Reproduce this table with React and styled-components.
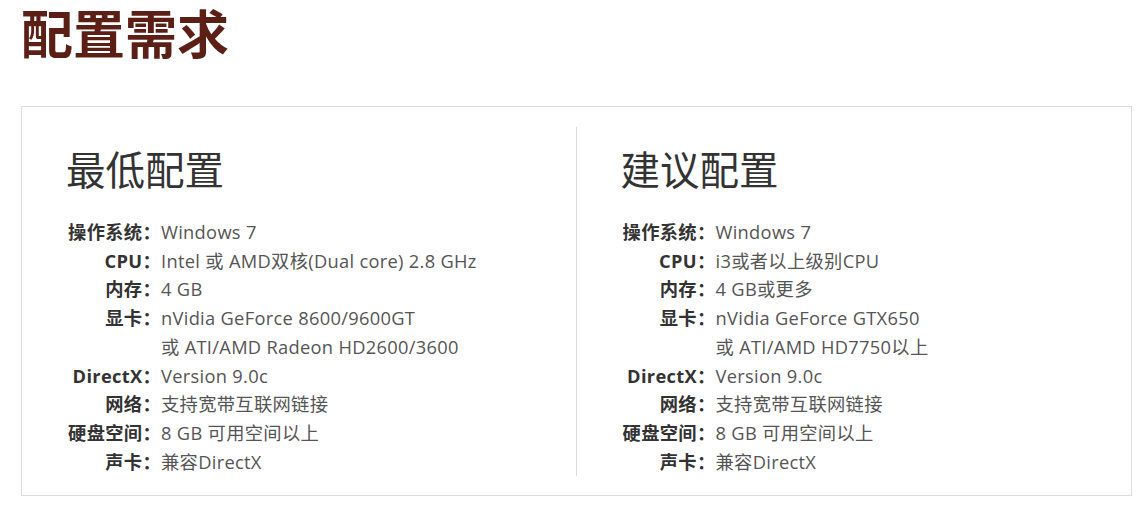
import React from "react";
import styled, { createGlobalStyle } from "styled-components";

const GlobalStyle = createGlobalStyle`
  body {
    margin: 0;
    background: #fff;
    font-family: "Open Sans", "Noto Sans CJK SC", sans-serif;
  }
`;

const Page = styled.div`
  padding: 2px 11px 0 21px;
`;

const Title = styled.h1`
  margin: 0 0 44px;
  font-family: "Noto Sans CJK SC", sans-serif;
  font-size: 52px;
  line-height: 60px;
  font-weight: 700;
  color: #5b1f16;
`;

const Box = styled.div`
  display: grid;
  grid-template-columns: 1fr 1fr;
  border: 1px solid #dcdcdc;
  padding: 20px 0 19px;
`;

const Column = styled.div`
  padding: 17px 0 0 43px;
  border-right: ${({ divider }) => (divider ? "1px solid #dcdcdc" : "none")};
`;

const Heading = styled.h2`
  margin: 0 0 26px 1px;
  font-family: "Noto Sans CJK SC", sans-serif;
  font-size: 39.5px;
  line-height: 48px;
  font-weight: 400;
  color: #333;
`;

const Specs = styled.dl`
  display: grid;
  grid-template-columns: 96px 1fr;
  margin: 0;
  line-height: 28.7px;
`;

const Label = styled.dt`
  text-align: right;
  white-space: nowrap;
  font-size: 18.3px;
  letter-spacing: 0.3px;
  font-weight: 700;
  color: #333;
`;

const Value = styled.dd`
  margin: 0;
  font-size: 18.3px;
  letter-spacing: 0.3px;
  color: #555;
`;

const minimum = [
  ["操作系统：", ["Windows 7"]],
  ["CPU：", ["Intel 或 AMD双核(Dual core) 2.8 GHz"]],
  ["内存：", ["4 GB"]],
  ["显卡：", ["nVidia GeForce 8600/9600GT", "或 ATI/AMD Radeon HD2600/3600"]],
  ["DirectX：", ["Version 9.0c"]],
  ["网络：", ["支持宽带互联网链接"]],
  ["硬盘空间：", ["8 GB 可用空间以上"]],
  ["声卡：", ["兼容DirectX"]],
];

const recommended = [
  ["操作系统：", ["Windows 7"]],
  ["CPU：", ["i3或者以上级别CPU"]],
  ["内存：", ["4 GB或更多"]],
  ["显卡：", ["nVidia GeForce GTX650", "或 ATI/AMD HD7750以上"]],
  ["DirectX：", ["Version 9.0c"]],
  ["网络：", ["支持宽带互联网链接"]],
  ["硬盘空间：", ["8 GB 可用空间以上"]],
  ["声卡：", ["兼容DirectX"]],
];

function SpecColumn({ title, rows, divider }) {
  return (
    <Column divider={divider}>
      <Heading>{title}</Heading>
      <Specs>
        {rows.map(([label, lines]) => (
          <React.Fragment key={label}>
            <Label>{label}</Label>
            <Value>
              {lines.map((line, i) => (
                <div key={i}>{line}</div>
              ))}
            </Value>
          </React.Fragment>
        ))}
      </Specs>
    </Column>
  );
}

export default function App() {
  return (
    <Page>
      <GlobalStyle />
      <Title>配置需求</Title>
      <Box>
        <SpecColumn title="最低配置" rows={minimum} divider />
        <SpecColumn title="建议配置" rows={recommended} />
      </Box>
    </Page>
  );
}
